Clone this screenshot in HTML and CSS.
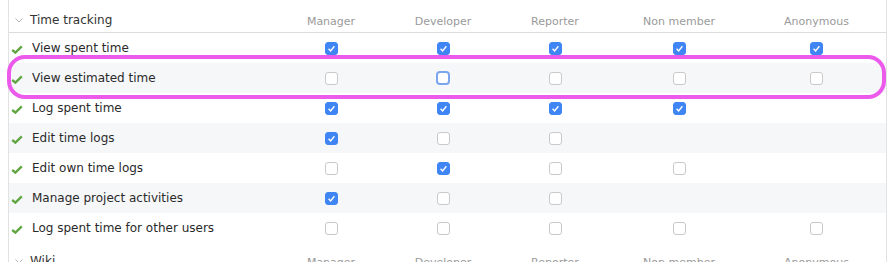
FILE: index.html
```html
<!DOCTYPE html>
<html>
<head>
    <title>Permissions</title>
    <link rel="stylesheet" href="styles.css">
</head>
    <body>
        <div class="permissions">
            <div class="section-head">
                <div class="section-title">
                    <svg class="chevron" width="8" height="5" viewBox="0 0 8 5"><path d="M0.5 0.5 L4 4 L7.5 0.5" fill="none" stroke="#b3b3b3" stroke-width="1"/></svg>
                    Time tracking
                </div>
                <div class="role">Manager</div>
                <div class="role">Developer</div>
                <div class="role">Reporter</div>
                <div class="role">Non member</div>
                <div class="role">Anonymous</div>
            </div>

            <div class="perm-row">
                <div class="perm-name"><svg class="tick" width="12" height="9" viewBox="0 0 12 9"><path d="M1.2 5 L4.4 7.6 L10.8 1.4" fill="none" stroke="#62a544" stroke-width="2.4"/></svg>View spent time</div>
                <div class="cell"><span class="cb on"><svg viewBox="0 0 13 13"><path d="M3.6 6.8 L5.6 8.9 L9.4 4.2" fill="none" stroke="#fff" stroke-width="1.4"/></svg></span></div>
                <div class="cell"><span class="cb on"><svg viewBox="0 0 13 13"><path d="M3.6 6.8 L5.6 8.9 L9.4 4.2" fill="none" stroke="#fff" stroke-width="1.4"/></svg></span></div>
                <div class="cell"><span class="cb on"><svg viewBox="0 0 13 13"><path d="M3.6 6.8 L5.6 8.9 L9.4 4.2" fill="none" stroke="#fff" stroke-width="1.4"/></svg></span></div>
                <div class="cell"><span class="cb on"><svg viewBox="0 0 13 13"><path d="M3.6 6.8 L5.6 8.9 L9.4 4.2" fill="none" stroke="#fff" stroke-width="1.4"/></svg></span></div>
                <div class="cell"><span class="cb on"><svg viewBox="0 0 13 13"><path d="M3.6 6.8 L5.6 8.9 L9.4 4.2" fill="none" stroke="#fff" stroke-width="1.4"/></svg></span></div>
            </div>

            <div class="perm-row odd highlighted">
                <div class="perm-name"><svg class="tick" width="12" height="9" viewBox="0 0 12 9"><path d="M1.2 5 L4.4 7.6 L10.8 1.4" fill="none" stroke="#62a544" stroke-width="2.4"/></svg>View estimated time</div>
                <div class="cell"><span class="cb"></span></div>
                <div class="cell"><span class="cb focus"></span></div>
                <div class="cell"><span class="cb"></span></div>
                <div class="cell"><span class="cb"></span></div>
                <div class="cell"><span class="cb"></span></div>
                <div class="marker"></div>
            </div>

            <div class="perm-row">
                <div class="perm-name"><svg class="tick" width="12" height="9" viewBox="0 0 12 9"><path d="M1.2 5 L4.4 7.6 L10.8 1.4" fill="none" stroke="#62a544" stroke-width="2.4"/></svg>Log spent time</div>
                <div class="cell"><span class="cb on"><svg viewBox="0 0 13 13"><path d="M3.6 6.8 L5.6 8.9 L9.4 4.2" fill="none" stroke="#fff" stroke-width="1.4"/></svg></span></div>
                <div class="cell"><span class="cb on"><svg viewBox="0 0 13 13"><path d="M3.6 6.8 L5.6 8.9 L9.4 4.2" fill="none" stroke="#fff" stroke-width="1.4"/></svg></span></div>
                <div class="cell"><span class="cb on"><svg viewBox="0 0 13 13"><path d="M3.6 6.8 L5.6 8.9 L9.4 4.2" fill="none" stroke="#fff" stroke-width="1.4"/></svg></span></div>
                <div class="cell"><span class="cb on"><svg viewBox="0 0 13 13"><path d="M3.6 6.8 L5.6 8.9 L9.4 4.2" fill="none" stroke="#fff" stroke-width="1.4"/></svg></span></div>
                <div class="cell"></div>
            </div>

            <div class="perm-row odd">
                <div class="perm-name"><svg class="tick" width="12" height="9" viewBox="0 0 12 9"><path d="M1.2 5 L4.4 7.6 L10.8 1.4" fill="none" stroke="#62a544" stroke-width="2.4"/></svg>Edit time logs</div>
                <div class="cell"><span class="cb on"><svg viewBox="0 0 13 13"><path d="M3.6 6.8 L5.6 8.9 L9.4 4.2" fill="none" stroke="#fff" stroke-width="1.4"/></svg></span></div>
                <div class="cell"><span class="cb"></span></div>
                <div class="cell"><span class="cb"></span></div>
                <div class="cell"></div>
                <div class="cell"></div>
            </div>

            <div class="perm-row">
                <div class="perm-name"><svg class="tick" width="12" height="9" viewBox="0 0 12 9"><path d="M1.2 5 L4.4 7.6 L10.8 1.4" fill="none" stroke="#62a544" stroke-width="2.4"/></svg>Edit own time logs</div>
                <div class="cell"><span class="cb"></span></div>
                <div class="cell"><span class="cb on"><svg viewBox="0 0 13 13"><path d="M3.6 6.8 L5.6 8.9 L9.4 4.2" fill="none" stroke="#fff" stroke-width="1.4"/></svg></span></div>
                <div class="cell"><span class="cb"></span></div>
                <div class="cell"><span class="cb"></span></div>
                <div class="cell"></div>
            </div>

            <div class="perm-row odd">
                <div class="perm-name"><svg class="tick" width="12" height="9" viewBox="0 0 12 9"><path d="M1.2 5 L4.4 7.6 L10.8 1.4" fill="none" stroke="#62a544" stroke-width="2.4"/></svg>Manage project activities</div>
                <div class="cell"><span class="cb on"><svg viewBox="0 0 13 13"><path d="M3.6 6.8 L5.6 8.9 L9.4 4.2" fill="none" stroke="#fff" stroke-width="1.4"/></svg></span></div>
                <div class="cell"><span class="cb"></span></div>
                <div class="cell"><span class="cb"></span></div>
                <div class="cell"></div>
                <div class="cell"></div>
            </div>

            <div class="perm-row">
                <div class="perm-name"><svg class="tick" width="12" height="9" viewBox="0 0 12 9"><path d="M1.2 5 L4.4 7.6 L10.8 1.4" fill="none" stroke="#62a544" stroke-width="2.4"/></svg>Log spent time for other users</div>
                <div class="cell"><span class="cb"></span></div>
                <div class="cell"><span class="cb"></span></div>
                <div class="cell"><span class="cb"></span></div>
                <div class="cell"><span class="cb"></span></div>
                <div class="cell"><span class="cb"></span></div>
            </div>

            <div class="section-head">
                <div class="section-title">
                    <svg class="chevron" width="8" height="5" viewBox="0 0 8 5"><path d="M0.5 0.5 L4 4 L7.5 0.5" fill="none" stroke="#b3b3b3" stroke-width="1"/></svg>
                    Wiki
                </div>
                <div class="role">Manager</div>
                <div class="role">Developer</div>
                <div class="role">Reporter</div>
                <div class="role">Non member</div>
                <div class="role">Anonymous</div>
            </div>
        </div>
    </body>
</html>
```

FILE: styles.css
```css
body {
    margin: 0;
    font-family: "DejaVu Sans", Verdana, sans-serif;
    font-size: 12px;
    color: #2a2a2a;
    background: #fff;
}
.permissions {
    width: 877px;
    margin-left: 8px;
    padding-top: 2px;
    border-left: 1px solid #e2e2e2;
    border-right: 1px solid #e2e2e2;
    min-height: 262px;
}
.section-head,
.perm-row {
    display: grid;
    grid-template-columns: 266px 112px 112px 112px 136px 139px;
}
.section-head {
    height: 30px;
    align-items: end;
    border-bottom: 1px solid #dcdcdc;
}
.section-title {
    display: flex;
    align-items: center;
    gap: 7px;
    padding: 0 0 4px 6px;
    line-height: 16px;
    color: #333;
}
.chevron {
    margin-top: 1px;
}
.role {
    text-align: center;
    padding-bottom: 2px;
    font-size: 11px;
    line-height: 16px;
    color: #9a9a9a;
}
.perm-row {
    height: 30px;
    align-items: center;
}
.perm-row.odd {
    background: #f6f7f9;
}
.highlighted {
    position: relative;
}
.perm-name {
    display: flex;
    align-items: center;
    gap: 9px;
    padding-left: 2px;
    line-height: 16px;
}
.tick {
    margin-top: 2px;
}
.cell {
    display: flex;
    justify-content: center;
}
.cb {
    width: 13px;
    height: 13px;
    box-sizing: border-box;
    border: 1px solid #c9c9c9;
    border-radius: 3px;
    background: #fff;
}
.cb svg {
    display: block;
    width: 13px;
    height: 13px;
    margin: -1px;
}
.cb.on {
    background: #3f85f4;
    border-color: #3f85f4;
}
.cb.focus {
    border: 2px solid #7ba6ee;
    width: 14px;
    height: 14px;
    border-radius: 4px;
}
.marker {
    position: absolute;
    top: -8px;
    left: -2px;
    right: 0;
    height: 44px;
    box-sizing: border-box;
    border: 4px solid #ec5aeb;
    border-radius: 18px;
    pointer-events: none;
}
```
